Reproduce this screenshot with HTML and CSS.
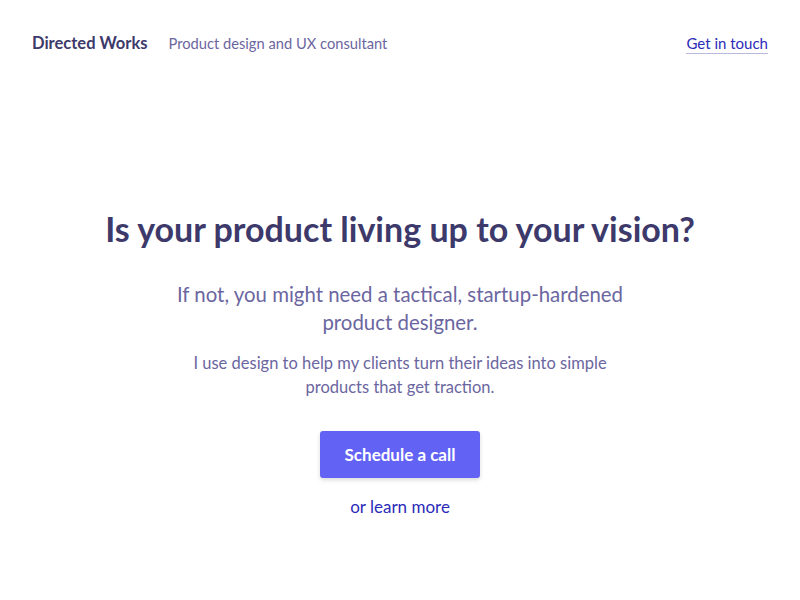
FILE: index.html
```html
<!DOCTYPE html>
<html lang="en">

<head>
    <meta charset="UTF-8">
    <meta name="viewport" content="width=device-width, initial-scale=1.0">
    <title>Directed Works</title>
    <link rel="stylesheet" href="styles.css">
</head>

<body>
    <!-- Top bar -->
    <header class="topbar">
        <div class="brand">
            <b class="brand-name">Directed Works</b>
            <span class="brand-tag">Product design and UX consultant</span>
        </div>
        <a class="link" href="#">Get in touch</a>
    </header>

    <!-- Hero -->
    <main class="hero">
        <h1 class="hero-title">Is your product living up to your vision?</h1>
        <p class="hero-sub">If not, you might need a tactical, startup-hardened<br>product designer.</p>
        <p class="hero-text">I use design to help my clients turn their ideas into simple<br>products that get traction.</p>
        <button class="cta">Schedule a call</button>
        <p class="more">or <a class="link" href="#">learn more</a></p>
    </main>
</body>

</html>
```

FILE: styles.css
```css
body {
    margin: 0;
    font-family: Lato, "Open Sans", sans-serif;
    background: #fff;
    color: #3d3a6b;
}

.topbar {
    display: flex;
    align-items: baseline;
    justify-content: space-between;
    padding: 33px 32px 0 32px;
}

.brand {
    display: flex;
    align-items: baseline;
    gap: 21px;
}

.brand-name {
    font-size: 16.5px;
    font-weight: 700;
    color: #3d3a6b;
}

.brand-tag {
    font-size: 14.7px;
    color: #6b669f;
}

.link {
    color: #2b2bb8;
    text-decoration: none;
    border-bottom: 1px solid #b8b8e0;
    padding-bottom: 1px;
}

.topbar .link {
    font-size: 15px;
}

.hero {
    display: flex;
    flex-direction: column;
    align-items: center;
    text-align: center;
    padding-top: 154px;
}

.hero-title {
    margin: 0;
    font-size: 34px;
    font-weight: 700;
    color: #3d3a6b;
}

.hero-sub {
    margin: 31px 0 0 0;
    font-size: 20.4px;
    line-height: 28px;
    color: #6b669f;
}

.hero-text {
    margin: 15px 0 0 0;
    font-size: 16.5px;
    line-height: 24px;
    color: #6b669f;
}

.cta {
    margin-top: 32px;
    width: 160px;
    height: 47px;
    border: none;
    border-radius: 3px;
    background-color: #6262f5;
    color: #fff;
    font-family: inherit;
    font-size: 17px;
    font-weight: 700;
    box-shadow: 0 2px 4px rgba(0, 0, 0, 0.15);
    cursor: pointer;
}

.more {
    margin: 18px 0 0 0;
    font-size: 17px;
    color: #2b2bb8;
}
```
